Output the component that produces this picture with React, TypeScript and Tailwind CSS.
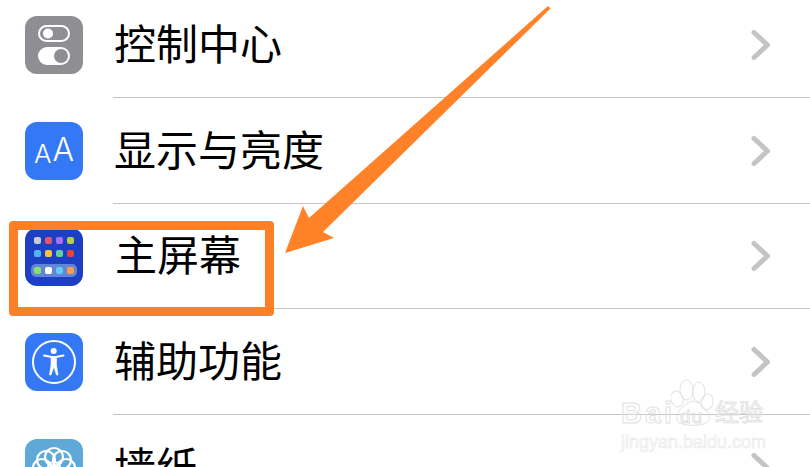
import React from "react";

const font = { fontFamily: '"Noto Sans CJK SC", "Liberation Sans", sans-serif' };

function Chevron() {
  return (
    <svg width="20" height="32" viewBox="0 0 20 32" className="shrink-0 mr-[39px]">
      <path d="M3 3.5 L16.5 16 L3 28.5" fill="none" stroke="#c4c4c7" strokeWidth="5" strokeLinecap="round" strokeLinejoin="round" />
    </svg>
  );
}

function ControlIcon() {
  return (
    <div className="w-[58px] h-[58px] rounded-[12px] bg-[#8e8e93] shrink-0">
      <svg width="58" height="58" viewBox="0 0 58 58">
        <rect x="14" y="10" width="30" height="15" rx="7.5" fill="none" stroke="#fff" strokeWidth="2" />
        <circle cx="23" cy="17.5" r="5" fill="#fff" />
        <rect x="13" y="31" width="32" height="18" rx="9" fill="#fff" />
        <circle cx="36" cy="40" r="7" fill="#8e8e93" />
      </svg>
    </div>
  );
}

function DisplayIcon() {
  return (
    <div className="w-[58px] h-[58px] rounded-[12px] bg-[#3478f6] flex items-end justify-center pb-[14px] gap-[1px] text-white shrink-0 font-light" style={{ fontFamily: '"Inter", sans-serif' }}>
      <span className="text-[26px] leading-[25px]">A</span>
      <span className="text-[32px] leading-[32px]">A</span>
    </div>
  );
}

function HomeIcon() {
  const row1 = ["#c9cdd0", "#e9546b", "#a86ff0", "#b4cf48"];
  const row2 = ["#52b4f5", "#f8c23c", "#62d0a0", "#e8433a"];
  const dock = ["#86e070", "#ffffff", "#5ecbf8", "#f4a04e"];
  return (
    <div className="w-[58px] h-[58px] rounded-[12px] bg-[#1c3fc4] flex flex-col items-center pt-[9px] shrink-0">
      <div className="flex gap-[4px]">
        {row1.map((c) => (
          <span key={c} className="w-[7px] h-[7px] rounded-[2px]" style={{ background: c }} />
        ))}
      </div>
      <div className="flex gap-[4px] mt-[6px]">
        {row2.map((c) => (
          <span key={c} className="w-[7px] h-[7px] rounded-[2px]" style={{ background: c }} />
        ))}
      </div>
      <div className="flex gap-[4px] mt-[7px] bg-[#6484d8] rounded-[5px] px-[3px] py-[3px]">
        {dock.map((c) => (
          <span key={c} className="w-[7px] h-[7px] rounded-[2px]" style={{ background: c }} />
        ))}
      </div>
    </div>
  );
}

function AccessIcon() {
  return (
    <div className="w-[58px] h-[58px] rounded-[12px] bg-[#3478f6] shrink-0">
      <svg width="58" height="58" viewBox="0 0 58 58">
        <circle cx="29" cy="29" r="21" fill="none" stroke="#fff" strokeWidth="2" />
        <circle cx="28.7" cy="18" r="3" fill="#fff" />
        <path d="M19 22.5 L26.5 24 H31 L38.5 22.5" fill="none" stroke="#fff" strokeWidth="2" strokeLinecap="round" strokeLinejoin="round" />
        <path d="M26 24 H31.5 V32 L33 42 H31.5 L28.8 34 L26 42 H24.5 L26 32 Z" fill="#fff" stroke="#fff" strokeWidth="0.6" strokeLinejoin="round" />
      </svg>
    </div>
  );
}

function WallpaperIcon() {
  return (
    <div className="w-[58px] h-[58px] rounded-[12px] bg-[#5fa9d9] shrink-0">
      <svg width="58" height="58" viewBox="0 0 58 58" fill="none" stroke="#fff" strokeWidth="2.2">
        <circle cx="29" cy="18" r="9" />
        <circle cx="21" cy="21" r="9" />
        <circle cx="37" cy="21" r="9" />
        <circle cx="17" cy="29" r="9" />
        <circle cx="41" cy="29" r="9" />
        <circle cx="29" cy="29" r="6" />
      </svg>
    </div>
  );
}

function Row({ icon, label, h, indent, last }: { icon: React.ReactNode; label: string; h: string; indent?: string; last?: boolean }) {
  return (
    <div className={`flex items-center pl-[25px] ${h}`}>
      {icon}
      <div className={`flex-1 self-stretch ml-[30px] flex items-center justify-between ${last ? "" : "border-b border-[#c6c6c8]"}`}>
        <span className={`text-[42px] leading-none text-black -translate-y-[3px] ${indent ?? "ml-[1px]"}`}>{label}</span>
        <Chevron />
      </div>
    </div>
  );
}

function Watermark() {
  const outline = "text-transparent [-webkit-text-stroke:1px_#e2e2e2]";
  return (
    <div className="absolute left-[621px] top-[378px] w-[170px] h-[82px]" style={{ fontFamily: '"Liberation Sans", "Noto Sans CJK SC", sans-serif' }}>
      <svg width="44" height="50" viewBox="0 0 44 50" className="absolute left-[50px] top-[1px]" fill="none" stroke="#e2e2e2" strokeWidth="1">
        <ellipse cx="6" cy="20" rx="6" ry="8" transform="rotate(-15 6 20)" />
        <ellipse cx="15.5" cy="11" rx="6.5" ry="10" />
        <ellipse cx="28" cy="13" rx="6" ry="10" />
        <ellipse cx="36" cy="23" rx="6" ry="8" transform="rotate(15 36 23)" />
        <path d="M22 22 C14 24 4 33 6 41 C8 48 36 48 38 41 C40 33 30 24 22 22 Z" />
      </svg>
      <span className={`absolute left-0 top-[21px] text-[29px] font-bold leading-none tracking-[3px] ${outline}`}>Bai</span>
      <span className={`absolute left-[59px] top-[29px] text-[19px] leading-none tracking-[1px] ${outline}`}>du</span>
      <span className={`absolute left-[94px] top-[23px] text-[24px] leading-none ${outline}`}>经验</span>
      <span className="absolute left-0 top-[55px] text-[18px] leading-none text-transparent [-webkit-text-stroke:0.6px_#e6e6e6]">jingyan.baidu.com</span>
    </div>
  );
}

export default function App() {
  return (
    <div className="relative w-[810px] h-[467px] overflow-hidden bg-white" style={font}>
      <div className="flex flex-col -mt-[8px]">
        <Row icon={<ControlIcon />} label="控制中心" h="h-[106px]" />
        <Row icon={<DisplayIcon />} label="显示与亮度" h="h-[106px]" />
        <Row icon={<HomeIcon />} label="主屏幕" h="h-[105px]" indent="ml-[2px]" />
        <Row icon={<AccessIcon />} label="辅助功能" h="h-[106px]" />
        <Row icon={<WallpaperIcon />} label="墙纸" h="h-[106px]" last />
      </div>
      <div className="absolute left-[9px] top-[221px] w-[265px] h-[95px] border-[9px] border-[#ff7f27] rounded-[4px]" />
      <svg width="810" height="467" viewBox="0 0 810 467" className="absolute left-0 top-0 pointer-events-none">
        <polygon points="548,6 550.5,8.5 323,232 334,238 285,253 303,206 309,218" fill="#ff8228" />
      </svg>
      <Watermark />
    </div>
  );
}
